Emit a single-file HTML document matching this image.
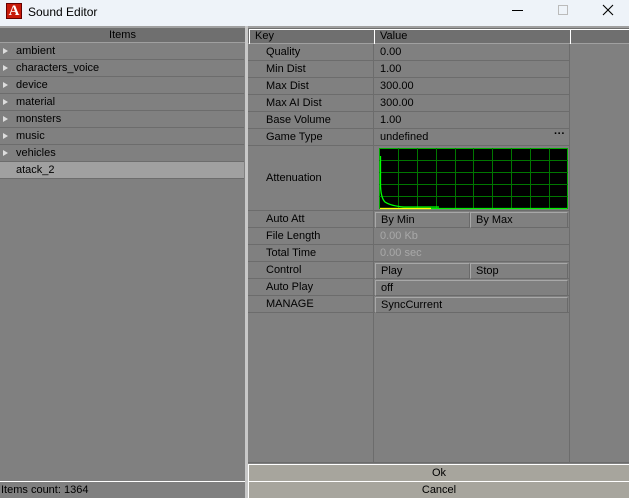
<!DOCTYPE html><html><head><style>
*{margin:0;padding:0;box-sizing:border-box}
body{width:629px;height:498px;background:#808080;font-family:"Liberation Sans",sans-serif;font-size:11px;color:#000;position:relative;overflow:hidden}
.a{position:absolute}
.title{left:0;top:0;width:629px;height:26px;background:#eef3f9;font-size:12px}
.row{position:absolute;left:0;width:244px;height:17px;border-bottom:1px solid #6c6c6c;line-height:16px;padding-left:16px}
.tri{position:absolute;left:3px;top:5px;width:0;height:0;border-left:5px solid #ddd;border-top:3px solid transparent;border-bottom:3px solid transparent}
.k{position:absolute;left:248px;width:125px;height:17px;border-bottom:1px solid #6c6c6c;line-height:16px;padding-left:18px}
.v{position:absolute;left:374px;width:195px;height:17px;border-bottom:1px solid #6c6c6c;line-height:16px;padding-left:6px}
.btn{position:absolute;height:16px;border-top:1px solid #a8a8a8;border-left:1px solid #a8a8a8;border-right:1px solid #6a6a6a;border-bottom:1px solid #6a6a6a;line-height:14px;padding-left:5px}
.gb{position:absolute;height:17px;background:#a7a59d;border-top:1px solid #fff;border-left:1px solid #fff;text-align:center;line-height:16px}
</style></head><body>
<div class="a title">
<div class="a" style="left:6px;top:3px;width:16px;height:16px;background:#c81a0a;border:1px solid #600;color:#fff;font-family:'Liberation Serif',serif;font-weight:bold;font-size:15px;line-height:15px;text-align:center">A</div>
<div class="a" style="left:28px;top:5px">Sound Editor</div>
<div class="a" style="left:512px;top:10px;width:11px;height:1px;background:#000"></div>
<div class="a" style="left:558px;top:5px;width:10px;height:10px;border:1px solid #bbb"></div>
<svg class="a" style="left:602px;top:4px" width="12" height="12"><path d="M1 1L11 11M11 1L1 11" stroke="#000" stroke-width="1.1"/></svg>
</div>
<div class="a" style="left:0;top:26px;width:629px;height:2px;background:#a0a0a0"></div>
<div class="a" style="left:245px;top:26px;width:3px;height:472px;background:#c8c8c8"></div>
<div class="a" style="left:0;top:28px;width:245px;height:15px;background:#6f6f6f;text-align:center;line-height:14px;border-bottom:1px solid #a0a0a0">Items</div>
<div class="row" style="top:43px"><span class="tri"></span>ambient</div>
<div class="row" style="top:60px"><span class="tri"></span>characters_voice</div>
<div class="row" style="top:77px"><span class="tri"></span>device</div>
<div class="row" style="top:94px"><span class="tri"></span>material</div>
<div class="row" style="top:111px"><span class="tri"></span>monsters</div>
<div class="row" style="top:128px"><span class="tri"></span>music</div>
<div class="row" style="top:145px"><span class="tri"></span>vehicles</div>
<div class="row" style="top:162px;background:#a0a0a0">atack_2</div>
<div class="a" style="left:0;top:481px;width:245px;height:1px;background:#fff"></div>
<div class="a" style="left:1px;top:484px;">Items count: 1364</div>

<div class="a" style="left:248px;top:28px;width:381px;height:16px;background:#6f6f6f;border-bottom:1px solid #a0a0a0"></div>
<div class="a" style="left:249px;top:29px;width:125px;height:15px;border-left:1px solid #fff;border-top:1px solid #fff;padding-left:5px;line-height:13px">Key</div>
<div class="a" style="left:374px;top:29px;width:196px;height:15px;border-left:1px solid #fff;border-top:1px solid #fff;padding-left:5px;line-height:13px">Value</div>
<div class="a" style="left:570px;top:29px;width:59px;height:15px;border-left:1px solid #fff;border-top:1px solid #fff"></div>
<div class="a" style="left:373px;top:44px;width:1px;height:419px;background:#6c6c6c"></div>
<div class="a" style="left:569px;top:44px;width:1px;height:419px;background:#6c6c6c"></div>
<div class="a" style="left:248px;top:462px;width:381px;height:1px;background:#6c6c6c"></div>

<div class="k" style="top:44px">Quality</div><div class="v" style="top:44px">0.00</div>
<div class="k" style="top:61px">Min Dist</div><div class="v" style="top:61px">1.00</div>
<div class="k" style="top:78px">Max Dist</div><div class="v" style="top:78px">300.00</div>
<div class="k" style="top:95px">Max AI Dist</div><div class="v" style="top:95px">300.00</div>
<div class="k" style="top:112px">Base Volume</div><div class="v" style="top:112px">1.00</div>
<div class="k" style="top:129px">Game Type</div><div class="v" style="top:129px">undefined<span class="a" style="right:4px;top:-3px;font-weight:bold">···</span></div>
<div class="k" style="top:146px;height:65px;line-height:64px">Attenuation</div><div class="v" style="top:146px;height:65px"></div>
<svg class="a" style="left:379px;top:148px" width="190" height="62" viewBox="0 0 190 62">
<rect x="0.5" y="0.5" width="188" height="60" fill="#000" stroke="#0a0"/>
<g stroke="#070" stroke-width="1">
<path d="M19.5 0V61M38.5 0V61M57.5 0V61M76.5 0V61M94.5 0V61M113.5 0V61M132.5 0V61M151.5 0V61M170.5 0V61M0 12.5H189M0 24.5H189M0 36.5H189M0 48.5H189"/>
</g>
<path d="M1.5 8V38Q2 50 6 54Q12 58 25 59H60" stroke="#0f0" stroke-width="1.3" fill="none"/>
<path d="M1 60.5H188" stroke="#0e0" stroke-width="1.2"/>
<path d="M1 60.5H52" stroke="#ff0" stroke-width="1.2"/>
</svg>
<div class="k" style="top:211px">Auto Att</div><div class="v" style="top:211px"></div>
<div class="btn" style="left:375px;top:212px;width:95px">By Min</div><div class="btn" style="left:470px;top:212px;width:98px">By Max</div>
<div class="k" style="top:228px">File Length</div><div class="v" style="top:228px;color:#a8a8a8">0.00 Kb</div>
<div class="k" style="top:245px">Total Time</div><div class="v" style="top:245px;color:#a8a8a8">0.00 sec</div>
<div class="k" style="top:262px">Control</div><div class="v" style="top:262px"></div>
<div class="btn" style="left:375px;top:263px;width:95px">Play</div><div class="btn" style="left:470px;top:263px;width:98px">Stop</div>
<div class="k" style="top:279px">Auto Play</div><div class="v" style="top:279px"></div>
<div class="btn" style="left:375px;top:280px;width:193px">off</div>
<div class="k" style="top:296px">MANAGE</div><div class="v" style="top:296px"></div>
<div class="btn" style="left:375px;top:297px;width:193px">SyncCurrent</div>

<div class="gb" style="left:248px;top:464px;width:381px">Ok</div>
<div class="gb" style="left:248px;top:481px;width:381px">Cancel</div>
</body></html>
